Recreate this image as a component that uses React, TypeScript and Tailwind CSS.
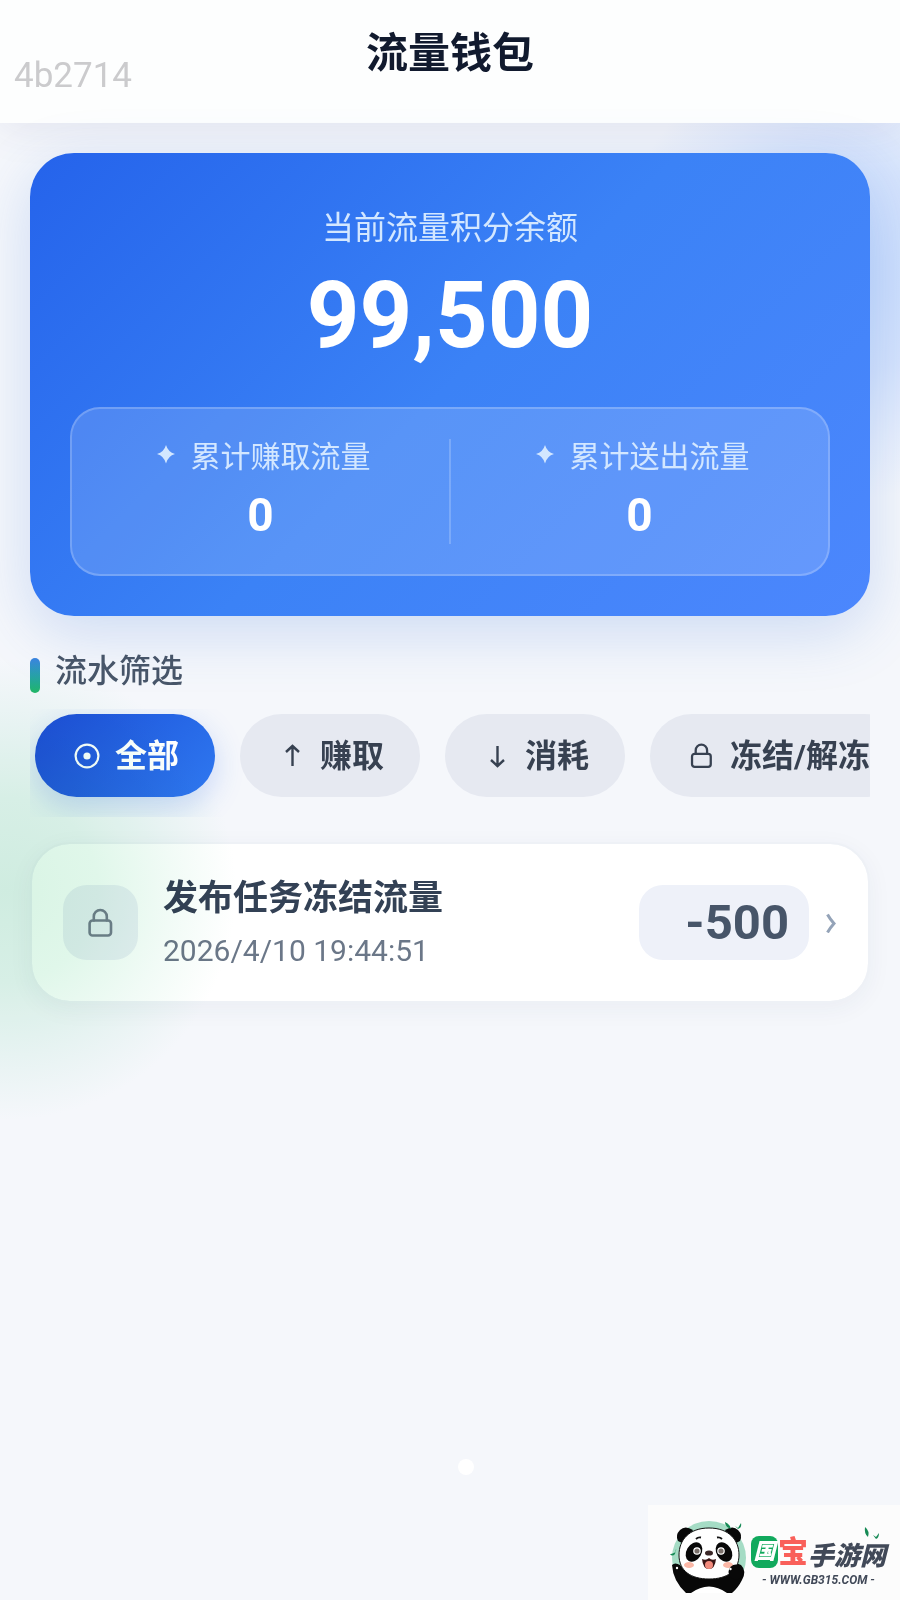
import { useState } from 'react';
import type { ReactNode } from 'react';
import clsx from 'clsx';

interface FlowRecord {
    id: string;
    title: string;
    time: string;
    amount: string;
}

const records: FlowRecord[] = [
    { id: '1', title: '发布任务冻结流量', time: '2026/4/10 19:44:51', amount: '-500' },
];

function LockIcon({ className }: { className?: string }) {
    return (
        <svg viewBox="0 0 28 32" className={className} fill="none" stroke="currentColor" strokeWidth="2.6" strokeLinecap="round" aria-hidden="true">
            <rect x="2.6" y="13.500" width="21.400" height="15" rx="3" />
            <path d="M6.800 13.500V9.500a6.500 6.500 0 0 1 13 0V13.500" />
        </svg>
    );
}

function ArrowIcon({ down }: { down?: boolean }) {
    return (
        <svg viewBox="0 0 28 28" className="h-7 w-7" fill="none" stroke="currentColor" strokeWidth="2.4" aria-hidden="true">
            <path d={down ? 'M14.500 4v20M8 18l6.500 6 6.500-6' : 'M14.500 24V4M8 10L14.500 4l6.500 6'} />
        </svg>
    );
}

const filters: { key: string; label: string; icon: ReactNode }[] = [
    {
        key: 'all',
        label: '全部',
        icon: (
            <svg viewBox="0 0 28 28" className="h-7 w-7" aria-hidden="true">
                <circle cx="14" cy="14" r="11.4" fill="none" stroke="currentColor" strokeWidth="2.2" />
                <circle cx="14" cy="14" r="3.6" fill="currentColor" />
            </svg>
        ),
    },
    { key: 'earn', label: '赚取', icon: <ArrowIcon /> },
    { key: 'spend', label: '消耗', icon: <ArrowIcon down /> },
    { key: 'freeze', label: '冻结/解冻', icon: <LockIcon className="h-7 w-7" /> },
];

function Stat({ label, value }: { label: string; value: string }) {
    return (
        <div className="flex-1 text-center">
            <div className="flex items-center justify-center gap-2 text-[30px] leading-9 text-[#d3e7ff]">
                <svg viewBox="0 0 32 32" className="h-8 w-8" fill="currentColor" aria-hidden="true">
                    <path d="M15 4Q17 11 24 13Q17 15 15 22.500Q13 15 6 13Q13 11 15 4Z" />
                </svg>
                <span>{label}</span>
            </div>
            <div className="mt-[11px] text-[46px] leading-[58px] font-bold text-white">{value}</div>
        </div>
    );
}

function Panda() {
    return (
        <svg viewBox="0 0 75 75" className="mb-1 h-[75px] w-[75px] shrink-0 overflow-visible" aria-hidden="true">
            <clipPath id="badge">
                <path d="M-2 0H77V50L64 72H12L-2 50Z" />
            </clipPath>
            <circle cx="37" cy="37" r="37" fill="#a5dcc5" clipPath="url(#badge)" />
            <path d="M0 44Q3 41 8 44Q14 52 22 56H50Q53 52 55 47Q60 40 69 44Q75 50 70 59Q66 67 60 72H14Q1 60 0 44Z" fill="#080808" />
            <path d="M6 20Q3 14 8 9Q13 4 21 9L12 23Z" fill="#080808" />
            <path d="M68 20Q71 14 66 9Q61 4 53 9L62 23Z" fill="#080808" />
            <path d="M37 7C57 7 67 19 67 34C67 50 55 58 37 58S7 50 7 34C7 19 17 7 37 7Z" fill="#fff" stroke="#111" strokeWidth="1" />
            <path d="M19 72Q37 59 55 72Z" fill="#fff" />
            <ellipse cx="22" cy="31" rx="7.500" ry="10.500" transform="rotate(30 22 31)" fill="#080808" />
            <ellipse cx="52" cy="31" rx="7.500" ry="10.500" transform="rotate(-30 52 31)" fill="#080808" />
            <circle cx="25" cy="30" r="3.200" fill="#7a706b" stroke="#fff" strokeWidth="1.200" />
            <circle cx="49" cy="30" r="3.200" fill="#7a706b" stroke="#fff" strokeWidth="1.200" />
            <path d="M24 18q2-2 5-1.500M45 16.500q3-.5 5 1.500" fill="none" stroke="#111" strokeWidth="1.800" />
            <ellipse cx="37" cy="32" rx="4" ry="2.600" fill="#3a2626" />
            <path d="M30 38Q34 40 37 37Q40 40 44 38Q43 48 37 48Q31 48 30 38Z" fill="#3a1616" />
            <ellipse cx="37" cy="44" rx="4" ry="4" fill="#f28b7d" />
            <ellipse cx="17" cy="44" rx="5" ry="3" fill="#fbb7a6" />
            <ellipse cx="56" cy="44" rx="5" ry="3" fill="#fbb7a6" />
            <circle cx="64" cy="51" r="7.500" fill="#080808" />
            <circle cx="58.500" cy="48" r="1.200" fill="#fff" />
            <circle cx="5" cy="47" r="1.200" fill="#fff" />
            <path d="M53 1q5 2 6 7q-6-2-6-7M-1 33q6-1 5-5l-1 5q-3 3-5 0M63 5l3 2l3-5q1 5-3 6z" fill="#168a55" />
        </svg>
    );
}

export default function App() {
    const [active, setActive] = useState('all');

    return (
        <div className="relative min-h-screen overflow-hidden bg-[#f5f7fb] font-['Roboto','Noto_Sans_CJK_SC',sans-serif]">
            {/* soft background glows */}
            <div className="pointer-events-none absolute -right-44 top-10 h-[460px] w-[460px] bg-[radial-gradient(closest-side,#c6dafc,#d5e3fc_45%,#e8effc_75%,transparent)]" />
            <div className="pointer-events-none absolute -left-56 top-[660px] z-10 h-[460px] w-[460px] bg-[radial-gradient(closest-side,#d8f4e4,#e0f7ea_40%,#f1fbf6_72%,#ffffff)] mix-blend-multiply" />

            <header className="relative bg-[#fdfefe] pt-[26px] pb-[41px] text-center shadow-[0_4px_40px_rgba(60,60,130,0.10)]">
                <h1 className="text-[42px] leading-[56px] font-bold text-[#111a2e]">流量钱包</h1>
                <span className="absolute bottom-[27px] left-[14px] text-[35px] leading-10 text-[#cbcbcd]">4b2714</span>
            </header>

            <main className="relative px-[30px] pt-[30px]">
                <section className="rounded-[44px] bg-linear-135 from-[#2563eb] via-[#3b82f6] to-[#4c87fd] px-10 pt-[55px] pb-10 text-center shadow-[0_16px_60px_rgba(59,120,220,0.22)]">
                    <h2 className="text-[32px] leading-10 text-[#d3e7ff]">当前流量积分余额</h2>
                    <p className="mt-[18px] text-[92px] leading-[100px] font-bold text-white">99,500</p>
                    <div className="mt-[41px] flex rounded-[30px] border-2 border-white/20 bg-white/15 py-[30px]">
                        <Stat label="累计赚取流量" value="0" />
                        <div className="w-[2px] bg-white/20" />
                        <Stat label="累计送出流量" value="0" />
                    </div>
                </section>

                <div className="mt-[33px] flex items-end gap-[15px]">
                    <span className="h-[35px] w-[10px] rounded-full bg-linear-to-b from-[#3b82e0] to-[#22b866]" />
                    <h2 className="text-[32px] leading-[44px] font-medium text-[#475569]">流水筛选</h2>
                </div>

                <div className="mt-4 flex gap-[25px] overflow-x-auto px-[5px] pt-[5px] pb-5 [scrollbar-width:none]">
                    {filters.map((f) => (
                        <button
                            key={f.key}
                            type="button"
                            onClick={() => setActive(f.key)}
                            className={clsx(
                                'flex h-[83px] shrink-0 items-center gap-[14px] rounded-full pr-9 pl-[38px] text-[32px] leading-10 font-bold whitespace-nowrap',
                                active === f.key
                                    ? 'bg-linear-135 from-[#1d4ed8] to-[#2f78f0] text-white shadow-[0_10px_30px_rgba(37,99,235,0.22)]'
                                    : 'bg-[#e6e9f1] text-[#374151]'
                            )}
                        >
                            {f.icon}
                            {f.label}
                        </button>
                    ))}
                </div>

                <ul className="mt-[25px]">
                    {records.map((r) => (
                        <li key={r.id}>
                            <a
                                href="#detail"
                                className="flex items-center rounded-[40px] border-2 border-[#eef1f6] bg-white bg-clip-padding px-[31px] py-[30px] shadow-[0_6px_24px_rgba(30,60,90,0.05)]"
                            >
                                <span className="flex h-[75px] w-[75px] items-center justify-center rounded-[24px] bg-[#edf0f7] text-[#75808f]">
                                    <LockIcon className="h-8 w-7" />
                                </span>
                                <span className="ml-[25px] flex-1">
                                    <span className="block text-[35px] leading-[50px] font-bold text-[#334155]">{r.title}</span>
                                    <span className="mt-[7px] block text-[30px] leading-10 text-[#6b7788]">{r.time}</span>
                                </span>
                                <span className="rounded-[24px] bg-[#eef1f9] pr-5 pl-[46px] text-[49px] leading-[75px] font-bold text-[#475569]">
                                    {r.amount}
                                </span>
                                <svg viewBox="0 0 11 20" className="ml-[17px] h-5 w-[11px]" fill="none" stroke="#94a3b8" strokeWidth="3" aria-hidden="true">
                                    <path d="M1.500 1.500Q4 6 8 10.500Q4 15 1.500 19.500" />
                                </svg>
                            </a>
                        </li>
                    ))}
                </ul>
            </main>

            {/* page indicator */}
            <div className="absolute inset-x-0 bottom-[125px] flex justify-center">
                <span className="ml-8 h-4 w-4 rounded-full bg-white" />
            </div>

            <footer className="absolute right-0 bottom-0 flex h-[95px] items-end gap-1 bg-[#fcfcfc] pr-[14px] pl-6">
                <Panda />
                <div className="pb-3 text-center">
                    <div className="flex items-end text-[26px] leading-8 font-black text-[#414958]">
                        <span className="mb-1 w-[27px] rounded-lg bg-[#11a95d] text-[22px] text-white italic">国</span>
                        <span className="text-[30px] leading-10 text-[#f9605a]">宝</span>
                        <span className="italic">手游网</span>
                    </div>
                    <div className="text-[12px] leading-4 font-bold whitespace-nowrap text-[#414958] italic">- WWW.GB315.COM -</div>
                </div>
                <svg viewBox="0 0 16 12" className="absolute top-[22px] right-5 h-3 w-4" fill="#168a55" aria-hidden="true">
                    <path d="M1 0Q6 4 4 10Q0 7 1 0M9 8l3 2l3-4q0 5-3 6z" />
                </svg>
            </footer>
        </div>
    );
}
